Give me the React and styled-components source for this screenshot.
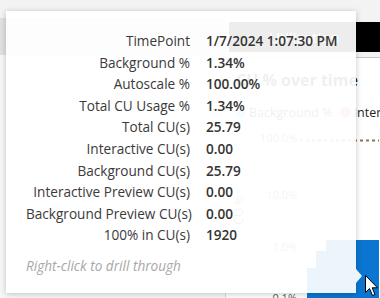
import React from 'react';
import styled, { createGlobalStyle } from 'styled-components';

const GlobalStyle = createGlobalStyle`
  html, body {
    margin: 0;
    padding: 0;
    overflow: hidden;
    background: #f3f3f3;
  }
`;

const Page = styled.div`
  position: relative;
  width: 380px;
  height: 298px;
  overflow: hidden;
  background: #f3f3f3;
  font-family: "Open Sans", "Noto Sans", sans-serif;
`;

const TopStrip = styled.div`
  height: 18px;
  background: #f3f3f3;
`;

const TabRow = styled.div`
  display: flex;
  height: 37px;
`;

const Tab = styled.div`
  display: flex;
  align-items: center;
  box-sizing: border-box;
  font-size: 15px;
  white-space: nowrap;
  ${p =>
    p.$active
      ? `
    flex: 1;
    min-width: 0;
    margin: 4px 0 3px 3px;
    padding-left: 40px;
    background: #000;
    color: #fff;
  `
      : `
    flex: 0 0 226px;
    padding-left: 80px;
    background: #e1e1e1;
    color: #c8c8c8;
  `}
`;

const Body = styled.div`
  display: flex;
  height: 243px;
`;

const SidePanel = styled.div`
  flex: 0 0 226px;
  box-sizing: border-box;
  background: #f7f7f7;
  border-right: 1px solid #dcdcdc;
`;

const ChartCard = styled.div`
  flex: 1;
  min-width: 0;
  overflow: hidden;
  margin-top: 2px;
  border-top: 1px solid #c8c8c8;
  background: #fff;
  display: flex;
  flex-direction: column;
`;

const ChartTitle = styled.div`
  padding: 12px 10px 0;
  font-size: 16px;
  line-height: 20px;
  font-weight: 700;
  color: #252423;
  white-space: nowrap;
`;

const Legend = styled.div`
  display: flex;
  align-items: center;
  margin-top: 12px;
  height: 20px;
  padding-left: 9px;
  gap: 7px;
  font-size: 12.5px;
  color: #252423;
  white-space: nowrap;
`;

const LegendItem = styled.div`
  display: flex;
  align-items: center;
  gap: 3px;
  &::before {
    content: '';
    flex: 0 0 11px;
    height: 11px;
    border-radius: 50%;
    background: ${p => p.$color};
  }
`;

const Tooltip = styled.div`
  position: absolute;
  left: 6px;
  top: 11px;
  width: 350px;
  height: 282px;
  box-sizing: border-box;
  padding: 19px 20px 0;
  background: rgba(255, 255, 255, 0.93);
  box-shadow: 0 1px 6px rgba(0, 0, 0, 0.22);
  font-family: "Open Sans", "Noto Sans", sans-serif;

  &::after {
    content: '';
    position: absolute;
    left: 100%;
    top: 258px;
    border-left: 6px solid rgba(255, 255, 255, 0.93);
    border-top: 7.5px solid transparent;
    border-bottom: 7.5px solid transparent;
  }
`;

const Rows = styled.div`
  display: grid;
  grid-template-columns: 164px auto;
  column-gap: 16px;
  font-size: 13.6px;
  line-height: 21.6px;
  white-space: nowrap;
`;

const Label = styled.div`
  text-align: right;
  color: #3b3a39;
`;

const Value = styled.div`
  font-weight: 600;
  color: #353433;
`;

const Footer = styled.div`
  margin-top: 9px;
  font-size: 13.6px;
  line-height: 21.6px;
  font-style: italic;
  color: #a8a8a8;
`;

const Cursor = styled.svg`
  position: absolute;
  left: 365px;
  top: 275px;
`;

const rows = [
  ['TimePoint', '1/7/2024 1:07:30 PM'],
  ['Background %', '1.34%'],
  ['Autoscale %', '100.00%'],
  ['Total CU Usage %', '1.34%'],
  ['Total CU(s)', '25.79'],
  ['Interactive CU(s)', '0.00'],
  ['Background CU(s)', '25.79'],
  ['Interactive Preview CU(s)', '0.00'],
  ['Background Preview CU(s)', '0.00'],
  ['100% in CU(s)', '1920'],
];

function Plot() {
  return (
    <svg width="153" height="176" style={{ display: 'block', flexShrink: 0 }}>
      <g fill="#605e5c" fontSize="11" fontFamily="Open Sans, sans-serif" textAnchor="end">
        <text x="71" y="20">100.0%</text>
        <text x="71" y="77">10.0%</text>
        <text x="71" y="129">1.0%</text>
        <text x="71" y="180">0.1%</text>
      </g>
      <text
        x="0"
        y="0"
        fill="#605e5c"
        fontSize="12"
        fontFamily="Open Sans, sans-serif"
        textAnchor="middle"
        transform="translate(17 88) rotate(-90)"
      >
        CU %
      </text>
      <line x1="74" y1="18.5" x2="153" y2="18.5" stroke="#8a7460" strokeWidth="2" strokeDasharray="3 3" />
      <g fill="#0b76d1">
        <rect x="81" y="146" width="9" height="30" />
        <rect x="90" y="129" width="10" height="47" />
        <rect x="100" y="118" width="53" height="58" />
      </g>
    </svg>
  );
}

export default function App() {
  return (
    <>
      <GlobalStyle />
      <Page>
        <TopStrip />
        <TabRow>
          <Tab>Users</Tab>
          <Tab $active>Utilization</Tab>
        </TabRow>
        <Body>
          <SidePanel />
          <ChartCard>
            <ChartTitle>CU % over time</ChartTitle>
            <Legend>
              <LegendItem $color="#9fd3f5">Background %</LegendItem>
              <LegendItem $color="#e8908a">Interactive %</LegendItem>
            </Legend>
            <Plot />
          </ChartCard>
        </Body>

        <Tooltip>
          <Rows>
            {rows.map(([label, value]) => (
              <React.Fragment key={label}>
                <Label>{label}</Label>
                <Value>{value}</Value>
              </React.Fragment>
            ))}
          </Rows>
          <Footer>Right-click to drill through</Footer>
        </Tooltip>

        <Cursor width="16" height="24" viewBox="0 0 16 24">
          <path
            d="M0.5 0.5 L0.5 17.5 L4.5 13.5 L7.5 20.5 L10 19.5 L7.2 12.8 L12.5 12.8 Z"
            fill="#fff"
            stroke="#000"
            strokeWidth="1"
            strokeLinejoin="miter"
          />
        </Cursor>
      </Page>
    </>
  );
}
